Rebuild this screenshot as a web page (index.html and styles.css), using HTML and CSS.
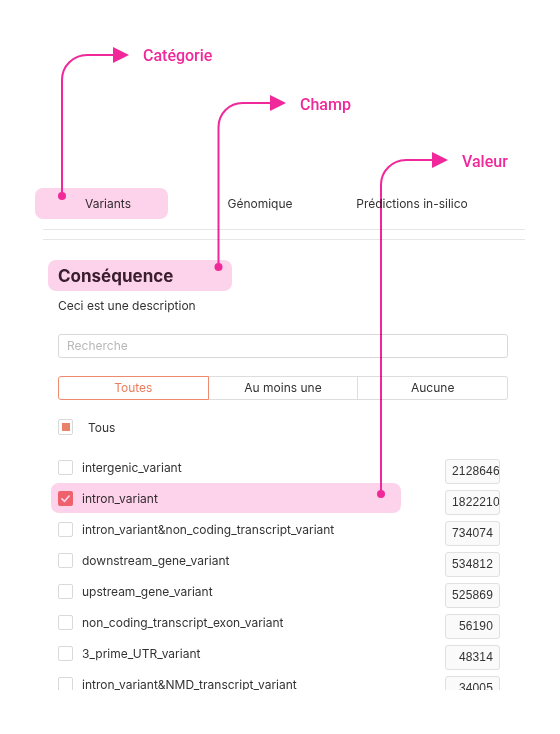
FILE: index.html
```html
<!DOCTYPE html>
<html lang="fr">
<head>
<meta charset="utf-8">
<title>Filtre</title>
<link rel="stylesheet" href="styles.css">
</head>
<body>
<div class="app">
  <nav class="tabs">
    <div class="tab">Variants</div>
    <div class="tab">Génomique</div>
    <div class="tab">Prédictions in-silico</div>
  </nav>
  <div class="rule"></div>
  <div class="rule second"></div>

  <section class="field">
    <h2 class="title">Conséquence</h2>
    <p class="desc">Ceci est une description</p>
    <div class="search">Recherche</div>
    <div class="segmented">
      <div class="seg active">Toutes</div>
      <div class="seg">Au moins une</div>
      <div class="seg">Aucune</div>
    </div>
    <div class="all">
      <span class="box partial"><span class="dot"></span></span>
      <span class="all-label">Tous</span>
    </div>
    <div class="list">
      <div class="row"><span class="box"></span><span class="label">intergenic_variant</span><span class="count">2128646</span></div>
      <div class="row"><span class="box checked"><svg viewBox="0 0 16 16" width="15" height="15"><path d="M4.2 8.3 L7 11 L11.8 5.4" fill="none" stroke="#fff" stroke-width="1.8" stroke-linecap="round" stroke-linejoin="round"/></svg></span><span class="label">intron_variant</span><span class="count">1822210</span></div>
      <div class="row"><span class="box"></span><span class="label">intron_variant&amp;non_coding_transcript_variant</span><span class="count">734074</span></div>
      <div class="row"><span class="box"></span><span class="label">downstream_gene_variant</span><span class="count">534812</span></div>
      <div class="row"><span class="box"></span><span class="label">upstream_gene_variant</span><span class="count">525869</span></div>
      <div class="row"><span class="box"></span><span class="label">non_coding_transcript_exon_variant</span><span class="count">56190</span></div>
      <div class="row"><span class="box"></span><span class="label">3_prime_UTR_variant</span><span class="count">48314</span></div>
      <div class="row"><span class="box"></span><span class="label">intron_variant&amp;NMD_transcript_variant</span><span class="count">34005</span></div>
    </div>
  </section>

  <div class="annotations">
    <svg class="marks" width="560" height="734" viewBox="0 0 560 734">
      <rect x="35" y="188" width="133" height="31" rx="8" fill="#fcd3ea"/>
      <rect x="48" y="260" width="184" height="31" rx="8" fill="#fcd3ea"/>
      <rect x="51" y="483" width="350" height="30" rx="8" fill="#fcd3ea"/>
      <g fill="none" stroke="#f0289a" stroke-width="2">
        <path d="M62 196 V80 A25 25 0 0 1 87 55 H116"/>
        <path d="M218.5 267 V127 A24 24 0 0 1 242.5 103 H272"/>
        <path d="M381 494 V185 A25 25 0 0 1 406 160 H434"/>
      </g>
      <g fill="#f0289a">
        <path d="M113 47 L129 55 L113 63 Z"/>
        <path d="M270 95 L286 103 L270 111 Z"/>
        <path d="M432 152 L448 160 L432 168 Z"/>
        <circle cx="62" cy="196" r="4"/>
        <circle cx="218.5" cy="267" r="4"/>
        <circle cx="381" cy="494" r="4"/>
      </g>
    </svg>
    <span class="note n1">Catégorie</span>
    <span class="note n2">Champ</span>
    <span class="note n3">Valeur</span>
  </div>
</div>
</body>
</html>
```

FILE: styles.css
```css
* { box-sizing: border-box; }

html, body {
  margin: 0;
  padding: 0;
  background: #ffffff;
}

body {
  font-family: Inter, "Liberation Sans", sans-serif;
  color: #333333;
}

.app {
  position: relative;
  width: 560px;
  height: 734px;
  padding-top: 188px;
  overflow: hidden;
}

.tabs {
  display: flex;
  margin-left: 32px;
  height: 31px;
}

.tab {
  width: 152px;
  text-align: center;
  line-height: 32px;
  font-size: 12px;
  color: #333333;
}

.rule {
  margin: 10px 35px 0 43px;
  height: 1px;
  background: #e6e6e6;
}

.rule.second {
  margin-top: 9px;
}

.field {
  padding: 20px 52px 0 58px;
}

.title {
  margin: 0;
  font-size: 17px;
  font-weight: 700;
  line-height: 33px;
  height: 31px;
  color: #3a2434;
}

.desc {
  margin: 6px 0 0;
  font-size: 12px;
  line-height: 18px;
  color: #333333;
}

.search {
  margin-top: 19px;
  height: 24px;
  border: 1px solid #d8d8d8;
  border-radius: 3px;
  padding-left: 8px;
  font-size: 12px;
  line-height: 22px;
  color: #b8b8b8;
}

.segmented {
  display: flex;
  margin-top: 18px;
  height: 24px;
}

.seg {
  flex: 1;
  border: 1px solid #dddddd;
  border-left: none;
  text-align: center;
  font-size: 12px;
  line-height: 22px;
  color: #333333;
}

.seg:first-child {
  border-radius: 3px 0 0 3px;
}

.seg:last-child {
  border-radius: 0 3px 3px 0;
}

.seg.active {
  border: 1px solid #ec8a6b;
  color: #ec7d5c;
}

.all {
  display: flex;
  align-items: center;
  margin-top: 19px;
  height: 16px;
}

.all-label {
  margin-left: 15px;
  font-size: 12px;
}

.box {
  flex: none;
  display: flex;
  align-items: center;
  justify-content: center;
  width: 15px;
  height: 15px;
  border: 1px solid #d9d9d9;
  border-radius: 2px;
  background: #ffffff;
}

.box.partial {
  height: 16px;
}

.box .dot {
  width: 8px;
  height: 8px;
  background: #e8836a;
}

.box.checked {
  border: none;
  background: #f07676;
}

.list {
  margin-top: 24px;
  margin-right: 8px;
  height: 231px;
  overflow: hidden;
}

.row {
  display: flex;
  align-items: flex-start;
  height: 31px;
}

.row .box {
  margin-top: 1px;
}

.label {
  flex: 1;
  margin-left: 9px;
  font-size: 12px;
  line-height: 17px;
  color: #333333;
  white-space: nowrap;
}

.count {
  flex: none;
  width: 55px;
  height: 25px;
  border: 1px solid #e0e0e0;
  border-radius: 3px;
  background: #fafafa;
  padding: 0 6px;
  font-family: "Liberation Sans", sans-serif;
  font-size: 12px;
  line-height: 23px;
  letter-spacing: 0.15px;
  text-align: right;
  overflow: hidden;
  white-space: nowrap;
  color: #333333;
}

.annotations {
  position: absolute;
  left: 0;
  top: 0;
  width: 560px;
  height: 734px;
  pointer-events: none;
  mix-blend-mode: multiply;
}

.marks {
  position: absolute;
  left: 0;
  top: 0;
}

.note {
  position: absolute;
  font-family: Roboto, "Liberation Sans", sans-serif;
  font-weight: 500;
  font-size: 16px;
  line-height: 20px;
  color: #f0289a;
}

.n1 { left: 143px; top: 46px; }
.n2 { left: 300px; top: 95px; }
.n3 { left: 462px; top: 152px; }
```
